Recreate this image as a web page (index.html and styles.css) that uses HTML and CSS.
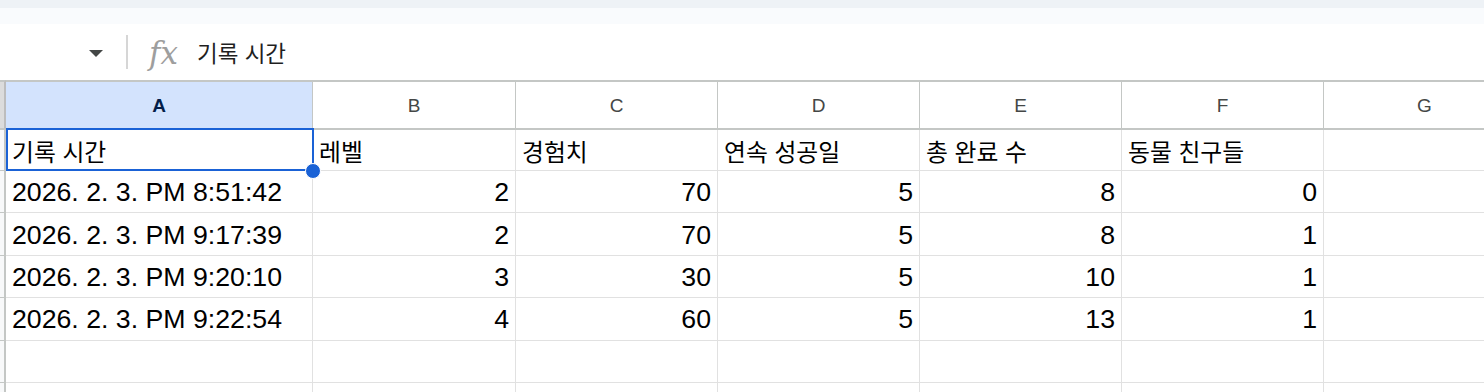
FILE: index.html
```html
<!DOCTYPE html>
<html lang="ko">
<head>
<meta charset="utf-8">
<link rel="stylesheet" href="styles.css">
</head>
<body>
<div class="band-top"></div>
<div class="band-sub"></div>
<div class="formula-bar">
  <div class="namebox"><span class="caret"></span></div>
  <span class="divider"></span>
  <span class="fx">fx</span>
  <span class="formula-text">기록 시간</span>
</div>
<div class="sheet">
  <div class="grid">
    <div class="corner hdr"></div>
    <div class="hdr col active">A</div>
    <div class="hdr col">B</div>
    <div class="hdr col">C</div>
    <div class="hdr col">D</div>
    <div class="hdr col">E</div>
    <div class="hdr col">F</div>
    <div class="hdr col">G</div>

    <div class="rowhead"></div>
    <div class="cell ko selected">기록 시간<span class="handle"></span></div>
    <div class="cell ko">레벨</div>
    <div class="cell ko">경험치</div>
    <div class="cell ko">연속 성공일</div>
    <div class="cell ko">총 완료 수</div>
    <div class="cell ko">동물 친구들</div>
    <div class="cell"></div>

    <div class="rowhead"></div>
    <div class="cell">2026. 2. 3. PM 8:51:42</div>
    <div class="cell num">2</div>
    <div class="cell num">70</div>
    <div class="cell num">5</div>
    <div class="cell num">8</div>
    <div class="cell num">0</div>
    <div class="cell"></div>

    <div class="rowhead"></div>
    <div class="cell">2026. 2. 3. PM 9:17:39</div>
    <div class="cell num">2</div>
    <div class="cell num">70</div>
    <div class="cell num">5</div>
    <div class="cell num">8</div>
    <div class="cell num">1</div>
    <div class="cell"></div>

    <div class="rowhead"></div>
    <div class="cell">2026. 2. 3. PM 9:20:10</div>
    <div class="cell num">3</div>
    <div class="cell num">30</div>
    <div class="cell num">5</div>
    <div class="cell num">10</div>
    <div class="cell num">1</div>
    <div class="cell"></div>

    <div class="rowhead"></div>
    <div class="cell">2026. 2. 3. PM 9:22:54</div>
    <div class="cell num">4</div>
    <div class="cell num">60</div>
    <div class="cell num">5</div>
    <div class="cell num">13</div>
    <div class="cell num">1</div>
    <div class="cell"></div>

    <div class="rowhead"></div>
    <div class="cell"></div>
    <div class="cell"></div>
    <div class="cell"></div>
    <div class="cell"></div>
    <div class="cell"></div>
    <div class="cell"></div>
    <div class="cell"></div>

    <div class="rowhead"></div>
    <div class="cell"></div>
    <div class="cell"></div>
    <div class="cell"></div>
    <div class="cell"></div>
    <div class="cell"></div>
    <div class="cell"></div>
    <div class="cell"></div>
  </div>
</div>
</body>
</html>
```

FILE: styles.css
```css
html, body {
  margin: 0;
  padding: 0;
  background: #ffffff;
  overflow: hidden;
  height: 392px;
  font-family: "Liberation Sans", "Noto Sans CJK KR", Arial, sans-serif;
  color: #000;
}

.band-top {
  height: 8px;
  background: #eef2f6;
}

.band-sub {
  height: 16px;
  background: #f9fbfd;
}

.formula-bar {
  height: 56px;
  display: flex;
  align-items: center;
  background: #ffffff;
}

.namebox {
  width: 122px;
  display: flex;
  justify-content: flex-end;
  padding-right: 4px;
  box-sizing: border-box;
  padding-top: 2px;
}

.caret {
  width: 0;
  height: 0;
  border-left: 7px solid transparent;
  border-right: 7px solid transparent;
  border-top: 7px solid #444746;
  margin-right: 15px;
}

.divider {
  width: 2px;
  height: 34px;
  background: #d6d6d6;
  margin-left: 4px;
}

.fx {
  font-family: "DejaVu Serif", "Liberation Serif", serif;
  font-style: italic;
  font-size: 31px;
  color: #9e9e9e;
  margin-left: 21px;
  line-height: 1;
  padding-top: 2px;
}

.formula-text {
  font-family: "Noto Sans CJK KR", sans-serif;
  font-size: 22.5px;
  color: #1f1f1f;
  margin-left: 19px;
  line-height: 1;
}

.sheet {
  overflow: hidden;
  width: 1484px;
  height: 312px;
}

.grid {
  display: grid;
  grid-template-columns: 6px 307px 203px repeat(5, 202px);
  grid-template-rows: 50px 41px repeat(6, 42.4px);
  width: 1525px;
}

.hdr {
  border-top: 2px solid #c4c7c5;
  border-bottom: 2px solid #c4c7c5;
  background: #ffffff;
  box-sizing: border-box;
}

.corner {
  background: #dcdcdc;
  border-right: 2px solid #bdbdbd;
}

.col {
  border-right: 1px solid #c4c7c5;
  display: flex;
  align-items: center;
  justify-content: center;
  font-size: 19px;
  color: #444746;
  padding-top: 1px;
}

.col.active {
  background: #d3e3fd;
  color: #041e49;
  font-weight: bold;
  border-right-color: #c4c7c5;
}

.rowhead {
  background: #f8f9fa;
  border-right: 2px solid #c4c7c5;
  border-bottom: 1px solid #c4c7c5;
  box-sizing: border-box;
}

.cell {
  border-right: 1px solid #e1e1e1;
  border-bottom: 1px solid #e1e1e1;
  box-sizing: border-box;
  font-size: 26.7px;
  display: flex;
  align-items: center;
  padding: 2px 6px 0 6px;
  white-space: nowrap;
  overflow: visible;
  position: relative;
}

.cell.ko {
  font-family: "Noto Sans CJK KR", sans-serif;
  font-size: 23.8px;
  padding-top: 0;
}

.cell.num {
  justify-content: flex-end;
}

.cell.selected {
  border-right-color: transparent;
}

.cell.selected::after {
  content: "";
  position: absolute;
  left: 0;
  top: -2px;
  right: -2px;
  bottom: -1px;
  border: 2px solid #1a62d6;
  pointer-events: none;
}

.handle {
  position: absolute;
  right: -9px;
  bottom: -9px;
  width: 14px;
  height: 14px;
  border-radius: 50%;
  background: #1a62d6;
  border: 1px solid #ffffff;
  z-index: 2;
}
```
